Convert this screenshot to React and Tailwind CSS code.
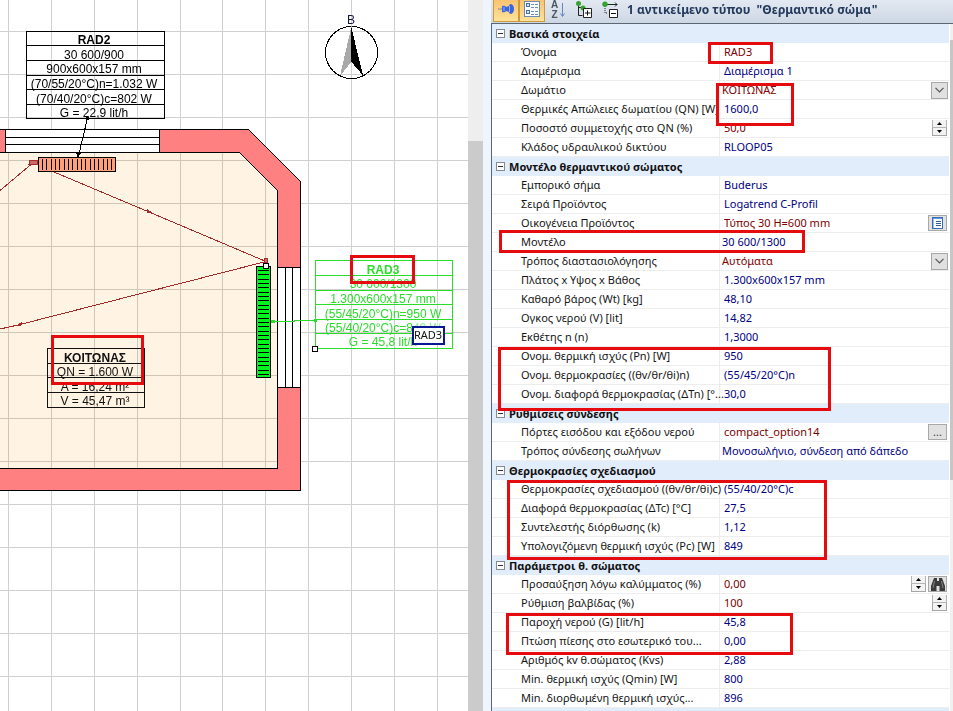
import { useState } from "react";

const SECTIONS = [
  {
    title: "Βασικά στοιχεία",
    rows: [
      { label: "Όνομα", value: "RAD3", kind: "text" },
      { label: "Διαμέρισμα", value: "Διαμέρισμα 1" },
      { label: "Δωμάτιο", value: "ΚΟΙΤΩΝΑΣ", kind: "select" },
      { label: "Θερμικές Απώλειες δωματίου (QN) [W]", value: "1600,0" },
      { label: "Ποσοστό συμμετοχής στο QN (%)", value: "50,0", kind: "spin" },
      { label: "Κλάδος υδραυλικού δικτύου", value: "RLOOP05" },
    ],
  },
  {
    title: "Μοντέλο θερμαντικού σώματος",
    rows: [
      { label: "Εμπορικό σήμα", value: "Buderus" },
      { label: "Σειρά Προϊόντος", value: "Logatrend C-Profil" },
      { label: "Οικογένεια Προϊόντος", value: "Τύπος 30 H=600 mm", kind: "list" },
      { label: "Μοντέλο", value: "30 600/1300", tight: true },
      { label: "Τρόπος διαστασιολόγησης", value: "Αυτόματα", kind: "select" },
      { label: "Πλάτος x Υψος x Βάθος", value: "1.300x600x157 mm" },
      { label: "Καθαρό βάρος (Wt) [kg]", value: "48,10" },
      { label: "Ογκος νερού (V) [lit]", value: "14,82" },
      { label: "Εκθέτης n (n)", value: "1,3000" },
      { label: "Ονομ. θερμική ισχύς (Pn) [W]", value: "950" },
      { label: "Ονομ. θερμοκρασίες ((θv/θr/θi)n)", value: "(55/45/20°C)n" },
      { label: "Ονομ. διαφορά θερμοκρασίας (ΔTn) [°...", value: "30,0" },
    ],
  },
  {
    title: "Ρυθμίσεις σύνδεσης",
    rows: [
      { label: "Πόρτες εισόδου και εξόδου νερού", value: "compact_option14", kind: "browse" },
      { label: "Τρόπος σύνδεσης σωλήνων", value: "Μονοσωλήνιο, σύνδεση από δάπεδο", tight: true },
    ],
  },
  {
    title: "Θερμοκρασίες σχεδιασμού",
    rows: [
      { label: "Θερμοκρασίες σχεδιασμού ((θv/θr/θi)c)", value: "(55/40/20°C)c" },
      { label: "Διαφορά θερμοκρασίας (ΔTc) [°C]", value: "27,5" },
      { label: "Συντελεστής διόρθωσης (k)", value: "1,12" },
      { label: "Υπολογιζόμενη θερμική ισχύς (Pc) [W]", value: "849" },
    ],
  },
  {
    title: "Παράμετροι θ. σώματος",
    rows: [
      { label: "Προσαύξηση λόγω καλύμματος (%)", value: "0,00", kind: "spin-search" },
      { label: "Ρύθμιση βαλβίδας (%)", value: "100", kind: "spin" },
      { label: "Παροχή νερού (G) [lit/h]", value: "45,8" },
      { label: "Πτώση πίεσης στο εσωτερικό του...", value: "0,00" },
      { label: "Αριθμός kv θ.σώματος (Kvs)", value: "2,88" },
      { label: "Min. θερμική ισχύς (Qmin) [W]", value: "800" },
      { label: "Min. διορθωμένη θερμική ισχύς...", value: "896" },
    ],
  },
];

const GRID = Array.from({ length: 60 }, (_, i) => i);
const RED = "#e60b0f";

/** Stacked one-line cells, as the drawing shows next to every radiator and room */
function TagTable({ x, width, ys, lines, baselines, color }) {
  return (
    <g stroke={color} fill="none">
      <rect x={x} y={ys[0]} width={width} height={ys[ys.length - 1] - ys[0]} />
      {ys.slice(1, -1).map((y) => (
        <path key={y} d={`M${x} ${y}h${width}`} />
      ))}
      <g stroke="none" fill={color} textAnchor="middle" fontSize="12">
        {lines.map((line, i) => (
          <text key={line} x={Math.floor(x + width / 2) - 1} y={baselines[i]} fontWeight={i === 0 ? 700 : 400}>
            {line}
          </text>
        ))}
      </g>
    </g>
  );
}

function FloorPlan() {
  return (
    <svg
      role="img"
      aria-label="Κάτοψη"
      className="block h-full w-full font-['Liberation_Sans',sans-serif]"
      shapeRendering="crispEdges"
    >
      {/* Room floor and grid */}
      <path d="M-1 152H240L278 190V469H-1z" fill="#fff4e3" />
      <g stroke="#d0d0d0" className="mix-blend-multiply">
        {GRID.map((i) => (
          <line key={`v${i}`} x1={Math.floor(8.3 + 42.93 * i) + 0.5} x2={Math.floor(8.3 + 42.93 * i) + 0.5} y1="0" y2="100%" />
        ))}
        {GRID.map((i) => (
          <line key={`h${i}`} x1="0" x2="100%" y1={31.5 + 43 * i} y2={31.5 + 43 * i} />
        ))}
      </g>

      {/* Walls */}
      <path
        d="M-2 129.500H248.500L300.500 181.500V490.500H-2V468.500H277.500V190.500L239.500 152.500H-2z"
        fill="#ff8080"
        stroke="#000"
      />
      {/* Windows */}
      <g fill="#fff" stroke="#000">
        <path d="M5.500 129.500H159.500V152.500H5.500z" />
        <path d="M5.500 137.500H159.500M5.500 144.500H159.500" />
        <path d="M277.500 267.500H300.500V387.500H277.500z" />
        <path d="M285.500 267.500V387.500M292.500 267.500V387.500" />
      </g>

      {/* Compass */}
      <g>
        <circle cx="351.500" cy="52.500" r="26" fill="none" stroke="#000" />
        <path d="M351.500 26L340 76L351.500 61.500z" fill="#a9a9a9" />
        <path d="M351 26L363 75.500L351 61.500z" fill="#000" />
        <text x="351" y="24" textAnchor="middle" fontSize="12" fill="#151540">Β</text>
      </g>

      {/* Pipes */}
      <g stroke="#a52a2a" fill="none">
        <path d="M0 190.500L34 162M54 172L149 212L266 261.500L18 325L0 329" />
        <path d="M147 209L153 213L147 213zM22 322L15 326L21 326z" fill="#a52a2a" stroke="none" />
        <path d="M30 160h7v4h-8z" fill="#c96a6a" />
        <path d="M264.500 258.500h3v4h-3z" fill="#c96a6a" />
      </g>

      {/* Radiator RAD2 */}
      <path d="M38.500 157.500H115.500V171.500H38.500z" fill="#ffa07a" stroke="#000" />
      <g stroke="#000">
        {GRID.slice(0, 17).map((i) => (
          <line key={i} x1={Math.round(42 + 4.33 * i) + 0.5} x2={Math.round(42 + 4.33 * i) + 0.5} y1="159" y2="170" />
        ))}
      </g>
      <TagTable
        x={26.5}
        width={138}
        ys={[31.5, 45.5, 60.5, 75.5, 89.5, 104.5, 118.5]}
        baselines={[44, 59, 73, 88, 103, 117]}
        lines={["RAD2", "30 600/900", "900x600x157 mm", "(70/55/20°C)n=1.032 W", "(70/40/20°C)c=802 W", "G = 22,9 lit/h"]}
        color="#000"
      />
      <path d="M87.500 118L78.500 156" stroke="#000" />
      <path d="M76 153h5l-3 5zM86 117h3v3h-3z" fill="#000" />

      {/* Radiator RAD3 */}
      <path d="M256.500 266.500H270.500V377.500H256.500z" fill="#00f51d" stroke="#000" />
      <g stroke="#000">
        {GRID.slice(0, 25).map((i) => (
          <line key={i} x1="258" x2="269" y1={Math.round(270 + 4.33 * i) + 0.5} y2={Math.round(270 + 4.33 * i) + 0.5} />
        ))}
      </g>
      <path d="M271 321.500H294L294 320.500H316" stroke="#2bdc2b" fill="none" />
      <path d="M271 320h4v3h-4zM314 319h3v3h-3z" fill="#2bdc2b" />
      <TagTable
        x={315.5}
        width={137}
        ys={[260.5, 275.5, 290.5, 304.5, 319.5, 333.5, 348.5]}
        baselines={[274, 288, 303, 318, 332, 346]}
        lines={["RAD3", "30 600/1300", "1.300x600x157 mm", "(55/45/20°C)n=950 W", "(55/40/20°C)c=849 W", "G = 45,8 lit/h"]}
        color="#2bdc2b"
      />
      <path d="M263.500 263.500h5v5h-5zM312.500 346.500h5v5h-5z" fill="#fff" stroke="#000" />

      {/* Room tag */}
      <TagTable
        x={47.5}
        width={97}
        ys={[348.5, 363.5, 377.5, 392.5, 407.5]}
        baselines={[362, 376, 391, 405]}
        lines={["ΚΟΙΤΩΝΑΣ", "QN = 1.600 W", "A = 16,24 m²", "V = 45,47 m³"]}
        color="#111"
      />

      {/* Hover tip */}
      <path d="M412 321H446V333H412z" fill="#fff" fillOpacity="0.5" />
      <path d="M413 327H444V344H413z" fill="#fff" stroke="#0b1796" strokeWidth="2" />
      <text x="428" y="339" textAnchor="middle" fontSize="11" fill="#111" className="font-['Noto_Sans',sans-serif]">
        RAD3
      </text>

      {/* Marks */}
      <g fill="none" stroke={RED} strokeWidth="3">
        <path d="M351.500 256.500H413.500V282.500H351.500z" />
        <path d="M52.500 336.500H142.500V383.500H52.500z" />
      </g>
    </svg>
  );
}

function PinIcon() {
  return (
    <svg width="16" height="12" viewBox="0 0 16 12" aria-hidden="true">
      <path d="M0 6h6" stroke="#7c88ae" />
      <path d="M4 3q3-1 4 1l3-1q0-2 2-2 3 1 3 5t-3 5q-2 0-2-2L8 8q-1 2-4 1z" fill="#3e64dd" />
      <path d="M11.500 3v6M6 4v4" stroke="#8eb0ff" />
    </svg>
  );
}

function CategoriesIcon() {
  return (
    <svg width="16" height="16" viewBox="0 0 16 16" aria-hidden="true" shapeRendering="crispEdges">
      <path d="M.5.5h15v15H.5z" fill="#fbfdff" stroke="#6a8db4" />
      <path d="M2.500 2.500h3v3h-3zM2.500 9.500h3v3h-3z" fill="#d4e4f6" stroke="#48709c" />
      <path d="M7 3.500h3M11 3.500h3M7 6.500h3M11 6.500h3M7 10.500h3M11 10.500h3M7 13.500h3M11 13.500h3" stroke="#6f8fb5" />
    </svg>
  );
}

function SortIcon() {
  return (
    <span className="flex items-center gap-0.5" aria-hidden="true">
      <span className="flex flex-col font-['Liberation_Sans',sans-serif] text-[10px] leading-[10px] font-bold text-[#4d5560]">
        <span>A</span>
        <span>Z</span>
      </span>
      <svg width="5" height="14" viewBox="0 0 5 14">
        <path d="M2.500 0v13M.5 10.500l2 3 2-3" fill="none" stroke="#6585c0" />
      </svg>
    </span>
  );
}

function ExpandIcon() {
  return (
    <svg width="17" height="17" viewBox="0 0 17 17" aria-hidden="true">
      <path d="M2.500 3v11.500h4M3 6.500h4" fill="none" stroke="#222" />
      <circle cx="2.500" cy="2.500" r="2.500" fill="#35a331" />
      <circle cx="7" cy="7" r="2.500" fill="#35a331" />
      <path d="M7.500 7.500h8v9h-8z" fill="#fff" stroke="#222" />
      <path d="M9 12h5.500M11.500 9.500v5" stroke="#111" />
    </svg>
  );
}

function CollapseIcon() {
  return (
    <svg width="17" height="17" viewBox="0 0 17 17" aria-hidden="true">
      <path d="M3 3.500h12M13 1.500l2 2-2 2" fill="none" stroke="#222" />
      <path d="M3 5v7h3" fill="none" stroke="#222" strokeDasharray="1 1" />
      <circle cx="3" cy="3.200" r="2.700" fill="#35a331" />
      <path d="M7.500 8.500h8v8h-8z" fill="#fff" stroke="#222" />
      <path d="M9 12.500h5" stroke="#111" />
    </svg>
  );
}

function Spinner({ label }) {
  return (
    <span className="flex w-[15px] flex-col">
      <button type="button" aria-label={`${label} +`} className="flex h-2 items-center justify-center border border-t-0 border-[#b5b5b5] bg-[#f3f3f3]">
        <svg width="5" height="3" viewBox="0 0 5 3"><path d="M0 3L2.500 0L5 3z" /></svg>
      </button>
      <button type="button" aria-label={`${label} -`} className="flex h-2 items-center justify-center border border-t-0 border-[#a5a5a5] bg-[#f3f3f3]">
        <svg width="5" height="3" viewBox="0 0 5 3"><path d="M0 0L2.500 3L5 0z" /></svg>
      </button>
    </span>
  );
}

function SmallButton({ label, children }) {
  return (
    <button
      type="button"
      aria-label={label}
      className="flex h-4 w-[19px] shrink-0 items-center justify-center border border-[#a8a8a8] bg-[#e1e1e1] leading-3 text-[#444]"
    >
      {children}
    </button>
  );
}

function Editor({ id, row }) {
  const [value, setValue] = useState(row.value);

  if (!row.kind) return <span className={row.tight ? "pl-0.5" : "pl-1"}>{row.value}</span>;

  if (row.kind === "select") {
    return (
      <span className="relative flex w-full items-center">
        <select id={id} className="h-[17px] w-full appearance-none bg-transparent pl-0.5 text-[#800000] outline-none">
          <option>{row.value}</option>
        </select>
        <span className="pointer-events-none absolute right-px flex h-[17px] w-[17px] items-center justify-center border border-[#a8a8a8] bg-[#e1e1e1]">
          <svg width="9" height="6" viewBox="0 0 9 6">
            <path d="M.5.8l4 4 4-4" fill="none" stroke="#555" strokeWidth="1.200" />
          </svg>
        </span>
      </span>
    );
  }

  return (
    <span className="flex w-full items-center gap-0.5 pr-0.5 pl-1">
      <input
        id={id}
        value={value}
        onChange={(e) => setValue(e.target.value)}
        className="h-4 min-w-0 flex-1 bg-transparent text-[#800000] outline-none"
      />
      {row.kind.startsWith("spin") && <Spinner label={row.label} />}
      {row.kind === "list" && (
        <SmallButton label="Λίστα">
          <svg width="11" height="12" viewBox="0 0 11 12" shapeRendering="crispEdges">
            <path d="M.5.5h10v11H.5z" fill="#fff" stroke="#376fae" />
            <path d="M1 1.500h9" stroke="#5f9ce0" />
            <path d="M1.500 2v9" stroke="#9dc2ed" />
            <path d="M4 4.500h5M4 6.500h5M4 8.500h5" stroke="#315f96" />
          </svg>
        </SmallButton>
      )}
      {row.kind === "browse" && <SmallButton label="Επιλογή">...</SmallButton>}
      {row.kind === "spin-search" && (
        <SmallButton label="Αναζήτηση">
          <svg width="14" height="13" viewBox="0 0 14 13">
            <path d="M3 0h3v3h2V0h3l3 8v5H8.500V8h-3v5H0V8z" fill="#3b3b3b" />
            <path d="M3.500 3L2 10M10.500 3L12 10" stroke="#858585" />
          </svg>
        </SmallButton>
      )}
    </span>
  );
}

function Section({ section, index }) {
  const [open, setOpen] = useState(true);
  return (
    <tbody>
      <tr>
        <th colSpan={2} scope="colgroup" className="bg-[#e2edfc] p-0 text-left font-bold text-[#111]">
          <div className="flex h-[19px] items-center gap-1 pl-1">
            <button
              type="button"
              aria-label={section.title}
              aria-expanded={open}
              onClick={() => setOpen(!open)}
              className="flex h-[9px] w-[9px] items-center justify-center border border-[#848b94] bg-white"
            >
              <span className="h-px w-[5px] bg-[#333]" />
            </button>
            <span>{section.title}</span>
          </div>
        </th>
      </tr>
      {open && section.rows.map((row, i) => {
        const id = `prop-${index}-${i}`;
        return (
          <tr key={row.label}>
            <th scope="row" className="p-0 text-left font-normal text-[#151515]">
              <div className="flex h-[19px] items-center border-b border-[#ededed] pl-[29px] whitespace-nowrap">
                {row.kind ? <label htmlFor={id}>{row.label}</label> : row.label}
              </div>
            </th>
            <td className="p-0 text-[#000080]">
              <div className="flex h-[19px] items-center border-b border-l border-[#ededed] whitespace-nowrap">
                <Editor id={id} row={row} />
              </div>
            </td>
          </tr>
        );
      })}
    </tbody>
  );
}

function PropertyPanel() {
  return (
    <aside className="flex w-[462px] shrink-0 flex-col font-['Noto_Sans',sans-serif]">
      {/* Toolbar */}
      <header className="flex h-[23px] shrink-0 items-center bg-linear-to-b from-[#e3e9f2] to-[#cdd7e4] pl-0.5">
        <button type="button" aria-label="Καρφίτσωμα" className="flex h-[22px] w-[26px] items-center justify-center self-start border border-t-0 border-[#cf9a3c] bg-linear-to-b from-[#f8c372] to-[#fee29a] pb-1">
          <PinIcon />
        </button>
        <button type="button" aria-label="Κατηγορίες" className="flex h-[22px] w-[26px] items-center justify-center self-start border border-t-0 border-[#cf9a3c] bg-linear-to-b from-[#f8c372] to-[#fee29a] pb-1">
          <CategoriesIcon />
        </button>
        <button type="button" aria-label="Ταξινόμηση" className="flex w-[26px] items-center justify-center pb-1">
          <SortIcon />
        </button>
        <button type="button" aria-label="Ανάπτυξη" className="flex w-[26px] items-center justify-center pb-1">
          <ExpandIcon />
        </button>
        <button type="button" aria-label="Σύμπτυξη" className="flex w-[26px] items-center justify-center pb-1">
          <CollapseIcon />
        </button>
        <h1 className="pb-1 pl-1 text-[12px] leading-4 font-bold whitespace-pre text-[#243a5c]">
          {'1 αντικείμενο τύπου  "Θερμαντικό σώμα"'}
        </h1>
      </header>

      <div className="flex min-h-0 flex-1 border-t border-l border-[#5d6673]">
        <div className="relative min-w-0 flex-1 overflow-hidden bg-[#e2edfc]">
          <table className="w-full table-fixed bg-white text-[11px] leading-4">
            <colgroup>
              <col className="w-[227px]" />
              <col />
            </colgroup>
            {SECTIONS.map((section, i) => (
              <Section key={section.title} section={section} index={i} />
            ))}
          </table>

          {/* Marks over the values of interest */}
          <div className="pointer-events-none absolute top-[18px] left-[216px] h-[22px] w-[65px] border-3 border-[#e60b0f]" />
          <div className="pointer-events-none absolute top-[59px] left-[224px] h-[43px] w-[78px] border-3 border-[#e60b0f]" />
          <div className="pointer-events-none absolute top-[206px] left-[7px] h-[23px] w-[306px] border-3 border-[#e60b0f]" />
          <div className="pointer-events-none absolute top-[323px] left-[6px] h-[64px] w-[333px] border-3 border-[#e60b0f]" />
          <div className="pointer-events-none absolute top-[456px] left-[15px] h-[80px] w-[320px] border-3 border-[#e60b0f]" />
          <div className="pointer-events-none absolute top-[589px] left-[14px] h-[42px] w-[287px] border-3 border-[#e60b0f]" />
        </div>
        <div className="w-1 shrink-0 border-l border-white bg-[#f0f0f0] pt-4">
          <div className="h-[440px] bg-[#c6c6c6]" />
        </div>
      </div>
    </aside>
  );
}

export default function App() {
  return (
    <div className="flex h-screen overflow-hidden bg-[#eff5fd]">
      <main className="min-w-0 flex-1 overflow-hidden bg-white">
        <FloorPlan />
      </main>
      <div className="mr-2 flex w-[15px] shrink-0 flex-col bg-[#eeeeee] pt-[141px]">
        <div className="flex-1 bg-[#cbcbcb]" />
      </div>
      <PropertyPanel />
    </div>
  );
}
